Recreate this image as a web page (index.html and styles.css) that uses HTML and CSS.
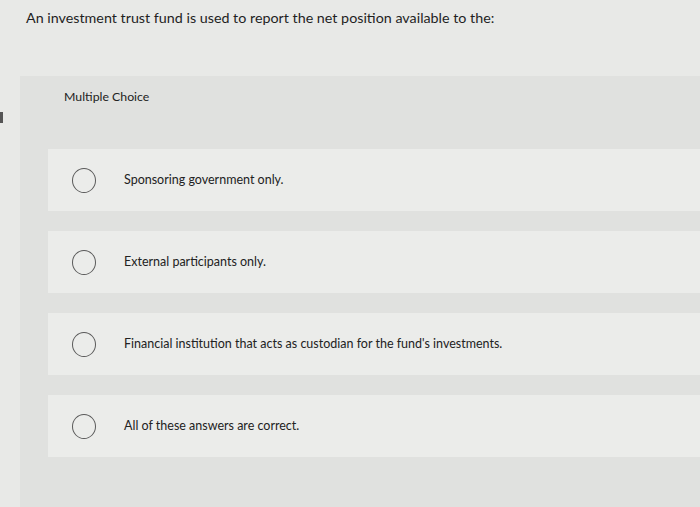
FILE: index.html
```html
<!DOCTYPE html>
<html>
<head>
<meta charset="utf-8">
<link rel="stylesheet" href="styles.css">
</head>
<body>
<div class="page">
  <div class="edge-mark"></div>
  <p class="question">An investment trust fund is used to report the net position available to the:</p>
  <section class="panel">
    <div class="panel-title">Multiple Choice</div>
    <div class="options">
      <label class="option"><span class="radio"></span><span class="opt-text">Sponsoring government only.</span></label>
      <label class="option"><span class="radio"></span><span class="opt-text">External participants only.</span></label>
      <label class="option"><span class="radio"></span><span class="opt-text">Financial institution that acts as custodian for the fund's investments.</span></label>
      <label class="option"><span class="radio"></span><span class="opt-text">All of these answers are correct.</span></label>
    </div>
  </section>
</div>
</body>
</html>
```

FILE: styles.css
```css
html, body {
  margin: 0;
  padding: 0;
  height: 100%;
  overflow: hidden;
}
body {
  background: #e8e9e7;
  font-family: "Lato", "Open Sans", "Liberation Sans", sans-serif;
  color: #222;
}
.page {
  position: relative;
  height: 507px;
}
.edge-mark {
  position: absolute;
  left: 0;
  top: 112px;
  width: 3px;
  height: 11px;
  background: #555;
}
.question {
  margin: 0;
  padding: 9px 0 0 26px;
  font-size: 14.3px;
  line-height: 18px;
  color: #1f1f1f;
}
.panel {
  margin: 49px 0 0 20px;
  background: #e0e1df;
  padding: 13px 0 60px 0;
}
.panel-title {
  padding-left: 44px;
  font-size: 12.3px;
  line-height: 16px;
  color: #222;
}
.options {
  margin-top: 44px;
  margin-left: 28px;
  display: flex;
  flex-direction: column;
  gap: 20px;
}
.option {
  display: flex;
  align-items: center;
  height: 62px;
  background: #ebecea;
}
.radio {
  box-sizing: border-box;
  width: 24px;
  height: 25px;
  border: 1.5px solid #5a5a5a;
  border-radius: 50%;
  margin-left: 24px;
  flex: none;
}
.opt-text {
  margin-left: 28px;
  font-size: 12.5px;
  line-height: 16px;
  color: #222;
}
```
